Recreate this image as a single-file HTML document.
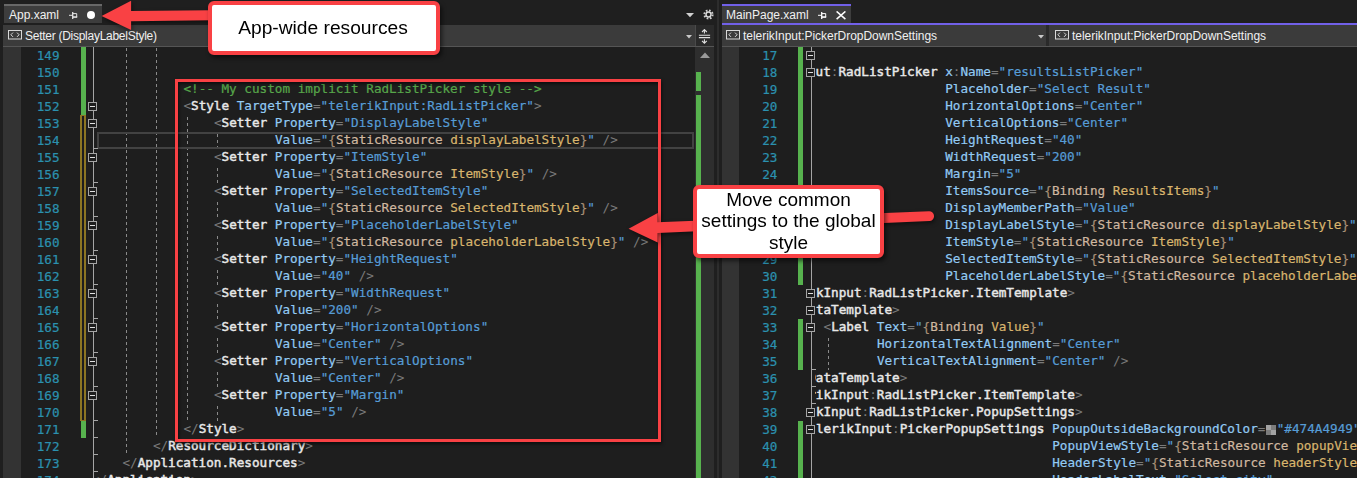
<!DOCTYPE html>
<html lang="en"><head><meta charset="utf-8"><title>XAML styles</title>
<style>
*{box-sizing:border-box;margin:0;padding:0}
html,body{width:1357px;height:478px;overflow:hidden;background:#1e1e1e}
body{position:relative;font-family:"Liberation Sans",sans-serif}
.abs{position:absolute}
.code{position:absolute;margin-top:-1.5px;white-space:pre;-webkit-text-stroke:0.2px;font-family:"DejaVu Sans Mono","Liberation Mono",monospace;font-size:12.66px;line-height:17px;height:17px;color:#dcdcdc;letter-spacing:0}
.ln{position:absolute;margin-top:0.4px;white-space:pre;-webkit-text-stroke:0.2px;font-family:"DejaVu Sans Mono","Liberation Mono",monospace;font-size:12.66px;line-height:17px;height:17px;color:#2b91af;text-align:right}
.d{color:#7a7a7a;-webkit-text-stroke:0}
.n{color:#e8e8e8;-webkit-text-stroke:0.45px}
.a{color:#92caf4}
.v{color:#569cd6}
.c{color:#57a64a}
.x{color:#d0b8a0}
.p{color:#d9b56d}
.b{color:#a88f76}
.ui{position:absolute;white-space:pre;font-family:"Liberation Sans",sans-serif;font-size:12px;color:#f0f0f0;line-height:16px}
.ob{position:absolute;width:9px;height:9px;border:1px solid #a5a5a5;background:#1e1e1e}
.ob:after{content:"";position:absolute;left:1px;top:3px;width:5px;height:1px;background:#e0e0e0}
.call{position:absolute;background:#fff;border:4px solid #f94144;border-radius:6px;box-shadow:2px 3px 4px rgba(0,0,0,.55);color:#000;font-family:"Liberation Sans",sans-serif;text-align:center}
</style></head>
<body>
<div class="abs" style="left:0;top:0;width:718px;height:25px;background:#1f1f1f"></div>
<div class="abs" style="left:4px;top:4px;width:98px;height:19px;background:#3d3d3d;border-top:2px solid #686868"></div>
<div class="ui" style="left:9px;top:7px">App.xaml</div>
<svg class="abs" style="left:68.9px;top:11px" width="10" height="9" viewBox="0 0 10 9"><path d="M0 4.3H3.6" fill="none" stroke="#e4e4e4" stroke-width="1"/><path d="M3.7 1V8" fill="none" stroke="#e4e4e4" stroke-width="1.3"/><path d="M4 2.6H7.7V6" fill="none" stroke="#e4e4e4" stroke-width="1"/><path d="M4 6.05H8.2" fill="none" stroke="#e4e4e4" stroke-width="1.6"/></svg>
<div class="abs" style="left:87px;top:11px;width:8px;height:8px;border-radius:50%;background:#fff"></div>
<div class="abs" style="left:3px;top:25px;width:692px;height:21px;background:#3b3b3b"></div>
<div class="abs" style="left:3px;top:46px;width:711px;height:1px;background:#555"></div>
<div class="abs" style="left:695px;top:25px;width:19px;height:21px;background:#2a2a2a;border-left:1px solid #4a4a4a"></div>
<div class="ui" style="left:25px;top:28.3px;letter-spacing:-0.27px">Setter (DisplayLabelStyle)</div>
<svg class="abs" style="left:8px;top:30px" width="14" height="10" viewBox="0 0 14 10"><rect x="0.5" y="0.5" width="13" height="8.5" fill="none" stroke="#d8d8d8" stroke-width="1"/><path d="M5 2.6L2.9 4.75L5 6.9M9 2.6L11.1 4.75L9 6.9" fill="none" stroke="#d8d8d8" stroke-width="1"/></svg>
<svg class="abs" style="left:686px;top:34.6px" width="6" height="4" viewBox="0 0 6 4"><path d="M0 0H6L3 3.5Z" fill="#c8c8c8"/></svg>
<svg class="abs" style="left:698px;top:28.5px" width="13" height="15" viewBox="0 0 13 15"><path d="M0.9 6.3H12.1M0.9 8.6H12.1M6.4 0.6V4.6M6.4 10.3V14.2M4 3L6.4 0.6L8.8 3M4 11.8L6.4 14.2L8.8 11.8" fill="none" stroke="#e0e0e0" stroke-width="1.1"/></svg>
<svg class="abs" style="left:686px;top:12.8px" width="8" height="5" viewBox="0 0 8 5"><path d="M0 0H8L4 4.2Z" fill="#d0d0d0"/></svg>
<svg class="abs" style="left:702.5px;top:8.5px" width="11" height="11" viewBox="0 0 11 11"><circle cx="5.5" cy="5.5" r="4.1" fill="none" stroke="#cfcfcf" stroke-width="2" stroke-dasharray="1.7 1.52"/><circle cx="5.5" cy="5.5" r="2.45" fill="none" stroke="#d8d8d8" stroke-width="1.5"/></svg>
<div class="abs" style="left:0;top:47px;width:3px;height:431px;background:#1f1f1f"></div>
<div class="abs" style="left:3px;top:47px;width:18px;height:431px;background:#333333"></div>
<div class="abs" style="left:695px;top:47px;width:19px;height:431px;background:#2e2e2e"></div>
<svg class="abs" style="left:700px;top:52px" width="10" height="6" viewBox="0 0 10 6"><path d="M0 6H10L5 0.5Z" fill="#999"/></svg>
<div class="abs" style="left:696.3px;top:72px;width:4.4px;height:19px;background:#57b24e"></div>
<div class="abs" style="left:696.3px;top:95px;width:4.4px;height:383px;background:#57b24e"></div>
<div class="abs" style="left:714px;top:0;width:8px;height:478px;background:#1f1f1f"></div>
<div class="abs" style="left:717px;top:0;width:2px;height:478px;background:#2d2d2d"></div>
<div class="abs" style="left:80.6px;top:47px;width:5.2px;height:68px;background:#57b24e"></div>
<div class="abs" style="left:80px;top:115px;width:6px;height:306px;border:1px solid #8c7523;border-right-width:2px;border-left-width:2px"></div>
<div class="abs" style="left:80.6px;top:421px;width:5.2px;height:17px;background:#57b24e"></div>
<div class="abs" style="left:93px;top:47px;width:1px;height:431px;background:#a5a5a5"></div>
<div class="abs" style="left:126px;top:47px;width:1px;height:408px;background:repeating-linear-gradient(to bottom,#8a8a8a 0,#8a8a8a 3px,transparent 3px,transparent 6px);background-position:0 1px;background-repeat:repeat-y;background-size:1px 6px"></div>
<div class="abs" style="left:156px;top:47px;width:1px;height:391px;background:repeating-linear-gradient(to bottom,#8a8a8a 0,#8a8a8a 3px,transparent 3px,transparent 6px);background-position:0 1px;background-repeat:repeat-y;background-size:1px 6px"></div>
<div class="abs" style="left:187px;top:115px;width:1px;height:306px;background:repeating-linear-gradient(to bottom,#8a8a8a 0,#8a8a8a 3px,transparent 3px,transparent 6px);background-position:0 2px;background-repeat:repeat-y;background-size:1px 6px"></div>
<div class="abs" style="left:217px;top:132px;width:1px;height:17px;background:repeating-linear-gradient(to bottom,#8a8a8a 0,#8a8a8a 3px,transparent 3px,transparent 6px);background-position:0 2px;background-repeat:repeat-y;background-size:1px 6px"></div>
<div class="abs" style="left:217px;top:166px;width:1px;height:17px;background:repeating-linear-gradient(to bottom,#8a8a8a 0,#8a8a8a 3px,transparent 3px,transparent 6px);background-position:0 2px;background-repeat:repeat-y;background-size:1px 6px"></div>
<div class="abs" style="left:217px;top:200px;width:1px;height:17px;background:repeating-linear-gradient(to bottom,#8a8a8a 0,#8a8a8a 3px,transparent 3px,transparent 6px);background-position:0 2px;background-repeat:repeat-y;background-size:1px 6px"></div>
<div class="abs" style="left:217px;top:234px;width:1px;height:17px;background:repeating-linear-gradient(to bottom,#8a8a8a 0,#8a8a8a 3px,transparent 3px,transparent 6px);background-position:0 2px;background-repeat:repeat-y;background-size:1px 6px"></div>
<div class="abs" style="left:217px;top:268px;width:1px;height:17px;background:repeating-linear-gradient(to bottom,#8a8a8a 0,#8a8a8a 3px,transparent 3px,transparent 6px);background-position:0 2px;background-repeat:repeat-y;background-size:1px 6px"></div>
<div class="abs" style="left:217px;top:302px;width:1px;height:17px;background:repeating-linear-gradient(to bottom,#8a8a8a 0,#8a8a8a 3px,transparent 3px,transparent 6px);background-position:0 2px;background-repeat:repeat-y;background-size:1px 6px"></div>
<div class="abs" style="left:217px;top:336px;width:1px;height:17px;background:repeating-linear-gradient(to bottom,#8a8a8a 0,#8a8a8a 3px,transparent 3px,transparent 6px);background-position:0 2px;background-repeat:repeat-y;background-size:1px 6px"></div>
<div class="abs" style="left:217px;top:370px;width:1px;height:17px;background:repeating-linear-gradient(to bottom,#8a8a8a 0,#8a8a8a 3px,transparent 3px,transparent 6px);background-position:0 2px;background-repeat:repeat-y;background-size:1px 6px"></div>
<div class="abs" style="left:217px;top:404px;width:1px;height:17px;background:repeating-linear-gradient(to bottom,#8a8a8a 0,#8a8a8a 3px,transparent 3px,transparent 6px);background-position:0 2px;background-repeat:repeat-y;background-size:1px 6px"></div>
<div class="abs" style="left:97px;top:132px;width:597px;height:17px;border:2px solid #424242"></div>
<div class="ln" style="left:21px;top:47px;width:38.5px">149</div>
<div class="ln" style="left:21px;top:64px;width:38.5px">150</div>
<div class="ln" style="left:21px;top:81px;width:38.5px">151</div><div class="code" style="left:183.40px;top:81px"><span class="c">&lt;!-- My custom implicit RadListPicker style --&gt;</span></div>
<div class="ln" style="left:21px;top:98px;width:38.5px">152</div><div class="code" style="left:183.40px;top:98px"><span class="d">&lt;</span><span class="n">Style</span> <span class="a">TargetType</span><span class="d">=</span><span class="v">"</span><span class="v">telerikInput:RadListPicker</span><span class="v">"</span><span class="d">&gt;</span></div>
<div class="ln" style="left:21px;top:115px;width:38.5px">153</div><div class="code" style="left:213.90px;top:115px"><span class="d">&lt;</span><span class="n">Setter</span> <span class="a">Property</span><span class="d">=</span><span class="v">"</span><span class="v">DisplayLabelStyle</span><span class="v">"</span></div>
<div class="ln" style="left:21px;top:132px;width:38.5px">154</div><div class="code" style="left:274.90px;top:132px"><span class="a">Value</span><span class="d">=</span><span class="v">"</span><span class="b">{</span><span class="x">StaticResource</span> <span class="p">displayLabelStyle</span><span class="b">}</span><span class="v">"</span> <span class="d">/&gt;</span></div>
<div class="ln" style="left:21px;top:149px;width:38.5px">155</div><div class="code" style="left:213.90px;top:149px"><span class="d">&lt;</span><span class="n">Setter</span> <span class="a">Property</span><span class="d">=</span><span class="v">"</span><span class="v">ItemStyle</span><span class="v">"</span></div>
<div class="ln" style="left:21px;top:166px;width:38.5px">156</div><div class="code" style="left:274.90px;top:166px"><span class="a">Value</span><span class="d">=</span><span class="v">"</span><span class="b">{</span><span class="x">StaticResource</span> <span class="p">ItemStyle</span><span class="b">}</span><span class="v">"</span> <span class="d">/&gt;</span></div>
<div class="ln" style="left:21px;top:183px;width:38.5px">157</div><div class="code" style="left:213.90px;top:183px"><span class="d">&lt;</span><span class="n">Setter</span> <span class="a">Property</span><span class="d">=</span><span class="v">"</span><span class="v">SelectedItemStyle</span><span class="v">"</span></div>
<div class="ln" style="left:21px;top:200px;width:38.5px">158</div><div class="code" style="left:274.90px;top:200px"><span class="a">Value</span><span class="d">=</span><span class="v">"</span><span class="b">{</span><span class="x">StaticResource</span> <span class="p">SelectedItemStyle</span><span class="b">}</span><span class="v">"</span> <span class="d">/&gt;</span></div>
<div class="ln" style="left:21px;top:217px;width:38.5px">159</div><div class="code" style="left:213.90px;top:217px"><span class="d">&lt;</span><span class="n">Setter</span> <span class="a">Property</span><span class="d">=</span><span class="v">"</span><span class="v">PlaceholderLabelStyle</span><span class="v">"</span></div>
<div class="ln" style="left:21px;top:234px;width:38.5px">160</div><div class="code" style="left:274.90px;top:234px"><span class="a">Value</span><span class="d">=</span><span class="v">"</span><span class="b">{</span><span class="x">StaticResource</span> <span class="p">placeholderLabelStyle</span><span class="b">}</span><span class="v">"</span> <span class="d">/&gt;</span></div>
<div class="ln" style="left:21px;top:251px;width:38.5px">161</div><div class="code" style="left:213.90px;top:251px"><span class="d">&lt;</span><span class="n">Setter</span> <span class="a">Property</span><span class="d">=</span><span class="v">"</span><span class="v">HeightRequest</span><span class="v">"</span></div>
<div class="ln" style="left:21px;top:268px;width:38.5px">162</div><div class="code" style="left:274.90px;top:268px"><span class="a">Value</span><span class="d">=</span><span class="v">"</span><span class="v">40</span><span class="v">"</span> <span class="d">/&gt;</span></div>
<div class="ln" style="left:21px;top:285px;width:38.5px">163</div><div class="code" style="left:213.90px;top:285px"><span class="d">&lt;</span><span class="n">Setter</span> <span class="a">Property</span><span class="d">=</span><span class="v">"</span><span class="v">WidthRequest</span><span class="v">"</span></div>
<div class="ln" style="left:21px;top:302px;width:38.5px">164</div><div class="code" style="left:274.90px;top:302px"><span class="a">Value</span><span class="d">=</span><span class="v">"</span><span class="v">200</span><span class="v">"</span> <span class="d">/&gt;</span></div>
<div class="ln" style="left:21px;top:319px;width:38.5px">165</div><div class="code" style="left:213.90px;top:319px"><span class="d">&lt;</span><span class="n">Setter</span> <span class="a">Property</span><span class="d">=</span><span class="v">"</span><span class="v">HorizontalOptions</span><span class="v">"</span></div>
<div class="ln" style="left:21px;top:336px;width:38.5px">166</div><div class="code" style="left:274.90px;top:336px"><span class="a">Value</span><span class="d">=</span><span class="v">"</span><span class="v">Center</span><span class="v">"</span> <span class="d">/&gt;</span></div>
<div class="ln" style="left:21px;top:353px;width:38.5px">167</div><div class="code" style="left:213.90px;top:353px"><span class="d">&lt;</span><span class="n">Setter</span> <span class="a">Property</span><span class="d">=</span><span class="v">"</span><span class="v">VerticalOptions</span><span class="v">"</span></div>
<div class="ln" style="left:21px;top:370px;width:38.5px">168</div><div class="code" style="left:274.90px;top:370px"><span class="a">Value</span><span class="d">=</span><span class="v">"</span><span class="v">Center</span><span class="v">"</span> <span class="d">/&gt;</span></div>
<div class="ln" style="left:21px;top:387px;width:38.5px">169</div><div class="code" style="left:213.90px;top:387px"><span class="d">&lt;</span><span class="n">Setter</span> <span class="a">Property</span><span class="d">=</span><span class="v">"</span><span class="v">Margin</span><span class="v">"</span></div>
<div class="ln" style="left:21px;top:404px;width:38.5px">170</div><div class="code" style="left:274.90px;top:404px"><span class="a">Value</span><span class="d">=</span><span class="v">"</span><span class="v">5</span><span class="v">"</span> <span class="d">/&gt;</span></div>
<div class="ln" style="left:21px;top:421px;width:38.5px">171</div><div class="code" style="left:183.40px;top:421px"><span class="d">&lt;/</span><span class="n">Style</span><span class="d">&gt;</span></div>
<div class="ln" style="left:21px;top:438px;width:38.5px">172</div><div class="code" style="left:152.90px;top:438px"><span class="d">&lt;/</span><span class="n">ResourceDictionary</span><span class="d">&gt;</span></div>
<div class="ln" style="left:21px;top:455px;width:38.5px">173</div><div class="code" style="left:122.40px;top:455px"><span class="d">&lt;/</span><span class="n">Application.Resources</span><span class="d">&gt;</span></div>
<div class="ln" style="left:21px;top:472px;width:38.5px">174</div><div class="code" style="left:91.90px;top:472px"><span class="d">&lt;/</span><span class="n">Application</span><span class="d">&gt;</span></div>
<div class="ob" style="left:88px;top:102px"></div><div class="ob" style="left:88px;top:119px"></div><div class="ob" style="left:88px;top:153px"></div><div class="ob" style="left:88px;top:187px"></div><div class="ob" style="left:88px;top:221px"></div><div class="ob" style="left:88px;top:255px"></div><div class="ob" style="left:88px;top:289px"></div><div class="ob" style="left:88px;top:323px"></div><div class="ob" style="left:88px;top:357px"></div><div class="ob" style="left:88px;top:391px"></div>
<div class="abs" style="left:93px;top:148px;width:5px;height:1px;background:#a5a5a5"></div><div class="abs" style="left:93px;top:182px;width:5px;height:1px;background:#a5a5a5"></div><div class="abs" style="left:93px;top:216px;width:5px;height:1px;background:#a5a5a5"></div><div class="abs" style="left:93px;top:250px;width:5px;height:1px;background:#a5a5a5"></div><div class="abs" style="left:93px;top:284px;width:5px;height:1px;background:#a5a5a5"></div><div class="abs" style="left:93px;top:318px;width:5px;height:1px;background:#a5a5a5"></div><div class="abs" style="left:93px;top:352px;width:5px;height:1px;background:#a5a5a5"></div><div class="abs" style="left:93px;top:386px;width:5px;height:1px;background:#a5a5a5"></div><div class="abs" style="left:93px;top:420px;width:5px;height:1px;background:#a5a5a5"></div><div class="abs" style="left:93px;top:437px;width:5px;height:1px;background:#a5a5a5"></div><div class="abs" style="left:93px;top:454px;width:5px;height:1px;background:#a5a5a5"></div><div class="abs" style="left:93px;top:471px;width:5px;height:1px;background:#a5a5a5"></div>
<div class="abs" style="left:722px;top:0;width:635px;height:25px;background:#1f1f1f"></div>
<div class="abs" style="left:722px;top:4px;width:129px;height:19px;background:#3d3d3d;border-top:2px solid #7160e8"></div>
<div class="abs" style="left:722px;top:23px;width:635px;height:2px;background:#7160e8"></div>
<div class="ui" style="left:726px;top:7px">MainPage.xaml</div>
<svg class="abs" style="left:817.8px;top:11px" width="10" height="9" viewBox="0 0 10 9"><path d="M0 4.3H3.6" fill="none" stroke="#ffffff" stroke-width="1"/><path d="M3.7 1V8" fill="none" stroke="#ffffff" stroke-width="1.3"/><path d="M4 2.6H7.7V6" fill="none" stroke="#ffffff" stroke-width="1"/><path d="M4 6.05H8.2" fill="none" stroke="#ffffff" stroke-width="1.6"/></svg>
<svg class="abs" style="left:836px;top:11px" width="10" height="9" viewBox="0 0 10 9"><path d="M0.6 0.4L9.4 8.1M9.4 0.4L0.6 8.1" fill="none" stroke="#ffffff" stroke-width="1.5"/></svg>
<div class="abs" style="left:722px;top:25px;width:635px;height:21px;background:#3b3b3b"></div>
<div class="abs" style="left:722px;top:46px;width:635px;height:1px;background:#555"></div>
<div class="abs" style="left:1046px;top:25px;width:3px;height:21px;background:#2a2a2a"></div>
<svg class="abs" style="left:726px;top:30px" width="14" height="10" viewBox="0 0 14 10"><rect x="0.5" y="0.5" width="13" height="8.5" fill="none" stroke="#d8d8d8" stroke-width="1"/><path d="M5 2.6L2.9 4.75L5 6.9M9 2.6L11.1 4.75L9 6.9" fill="none" stroke="#d8d8d8" stroke-width="1"/></svg>
<div class="ui" style="left:743px;top:28.2px;letter-spacing:-0.04px">telerikInput:PickerDropDownSettings</div>
<svg class="abs" style="left:1038px;top:34.6px" width="6" height="4" viewBox="0 0 6 4"><path d="M0 0H6L3 3.5Z" fill="#c8c8c8"/></svg>
<svg class="abs" style="left:1055px;top:30px" width="14" height="10" viewBox="0 0 14 10"><rect x="0.5" y="0.5" width="13" height="8.5" fill="none" stroke="#d8d8d8" stroke-width="1"/><path d="M5 2.6L2.9 4.75L5 6.9M9 2.6L11.1 4.75L9 6.9" fill="none" stroke="#d8d8d8" stroke-width="1"/></svg>
<div class="ui" style="left:1072px;top:28.2px;letter-spacing:-0.04px">telerikInput:PickerDropDownSettings</div>
<div class="abs" style="left:722px;top:47px;width:17px;height:431px;background:#333333"></div>
<div class="abs" style="left:798.4px;top:47px;width:5px;height:238px;background:#57b24e"></div>
<div class="abs" style="left:798.4px;top:319px;width:5px;height:51px;background:#57b24e"></div>
<div class="abs" style="left:798.4px;top:421px;width:5px;height:57px;background:#57b24e"></div>
<div class="abs" style="left:811px;top:47px;width:1px;height:431px;background:#a5a5a5"></div>
<div class="abs" style="left:815px;top:47px;width:542px;height:431px;overflow:hidden">
<div class="code" style="left:0.58px;top:17px"><span class="n">ut</span><span class="d">:</span><span class="n">RadListPicker</span> <span class="a">x</span><span class="d">:</span><span class="a">Name</span><span class="d">=</span><span class="v">"</span><span class="v">resultsListPicker</span><span class="v">"</span></div>
<div class="code" style="left:130.20px;top:34px"><span class="a">Placeholder</span><span class="d">=</span><span class="v">"</span><span class="v">Select Result</span><span class="v">"</span></div>
<div class="code" style="left:130.20px;top:51px"><span class="a">HorizontalOptions</span><span class="d">=</span><span class="v">"</span><span class="v">Center</span><span class="v">"</span></div>
<div class="code" style="left:130.20px;top:68px"><span class="a">VerticalOptions</span><span class="d">=</span><span class="v">"</span><span class="v">Center</span><span class="v">"</span></div>
<div class="code" style="left:130.20px;top:85px"><span class="a">HeightRequest</span><span class="d">=</span><span class="v">"</span><span class="v">40</span><span class="v">"</span></div>
<div class="code" style="left:130.20px;top:102px"><span class="a">WidthRequest</span><span class="d">=</span><span class="v">"</span><span class="v">200</span><span class="v">"</span></div>
<div class="code" style="left:130.20px;top:119px"><span class="a">Margin</span><span class="d">=</span><span class="v">"</span><span class="v">5</span><span class="v">"</span></div>
<div class="code" style="left:130.20px;top:136px"><span class="a">ItemsSource</span><span class="d">=</span><span class="v">"</span><span class="b">{</span><span class="x">Binding</span> <span class="p">ResultsItems</span><span class="b">}</span><span class="v">"</span></div>
<div class="code" style="left:130.20px;top:153px"><span class="a">DisplayMemberPath</span><span class="d">=</span><span class="v">"</span><span class="v">Value</span><span class="v">"</span></div>
<div class="code" style="left:130.20px;top:170px"><span class="a">DisplayLabelStyle</span><span class="d">=</span><span class="v">"</span><span class="b">{</span><span class="x">StaticResource</span> <span class="p">displayLabelStyle</span><span class="b">}</span><span class="v">"</span></div>
<div class="code" style="left:130.20px;top:187px"><span class="a">ItemStyle</span><span class="d">=</span><span class="v">"</span><span class="b">{</span><span class="x">StaticResource</span> <span class="p">ItemStyle</span><span class="b">}</span><span class="v">"</span></div>
<div class="code" style="left:130.20px;top:204px"><span class="a">SelectedItemStyle</span><span class="d">=</span><span class="v">"</span><span class="b">{</span><span class="x">StaticResource</span> <span class="p">SelectedItemStyle</span><span class="b">}</span><span class="v">"</span></div>
<div class="code" style="left:130.20px;top:221px"><span class="a">PlaceholderLabelStyle</span><span class="d">=</span><span class="v">"</span><span class="b">{</span><span class="x">StaticResource</span> <span class="p">placeholderLabelStyle</span><span class="b">}</span><span class="v">"</span></div>
<div class="code" style="left:0.88px;top:238px"><span class="n">kInput</span><span class="d">:</span><span class="n">RadListPicker.ItemTemplate</span><span class="d">&gt;</span></div>
<div class="code" style="left:0.88px;top:255px"><span class="n">taTemplate</span><span class="d">&gt;</span></div>
<div class="code" style="left:8.50px;top:272px"><span class="d">&lt;</span><span class="n">Label</span> <span class="a">Text</span><span class="d">=</span><span class="v">"</span><span class="b">{</span><span class="x">Binding</span> <span class="p">Value</span><span class="b">}</span><span class="v">"</span></div>
<div class="code" style="left:61.88px;top:289px"><span class="a">HorizontalTextAlignment</span><span class="d">=</span><span class="v">"</span><span class="v">Center</span><span class="v">"</span></div>
<div class="code" style="left:61.88px;top:306px"><span class="a">VerticalTextAlignment</span><span class="d">=</span><span class="v">"</span><span class="v">Center</span><span class="v">"</span> <span class="d">/&gt;</span></div>
<div class="code" style="left:-6.75px;top:323px"><span class="n">DataTemplate</span><span class="d">&gt;</span></div>
<div class="code" style="left:-6.75px;top:340px"><span class="n">rikInput</span><span class="d">:</span><span class="n">RadListPicker.ItemTemplate</span><span class="d">&gt;</span></div>
<div class="code" style="left:0.88px;top:357px"><span class="n">kInput</span><span class="d">:</span><span class="n">RadListPicker.PopupSettings</span><span class="d">&gt;</span></div>
<div class="code" style="left:0.88px;top:374px"><span class="n">lerikInput</span><span class="d">:</span><span class="n">PickerPopupSettings</span> <span class="a">PopupOutsideBackgroundColor</span><span class="d">=</span></div>
<div class="code" style="left:461.75px;top:374px"><span class="v">"#474A4949"</span></div>
<div class="code" style="left:237.25px;top:391px"><span class="a">PopupViewStyle</span><span class="d">=</span><span class="v">"</span><span class="b">{</span><span class="x">StaticResource</span> <span class="p">popupViewStyle</span><span class="b">}</span><span class="v">"</span></div>
<div class="code" style="left:237.25px;top:408px"><span class="a">HeaderStyle</span><span class="d">=</span><span class="v">"</span><span class="b">{</span><span class="x">StaticResource</span> <span class="p">headerStyle</span><span class="b">}</span><span class="v">"</span></div>
<div class="code" style="left:237.25px;top:425px"><span class="a">HeaderLabelText</span><span class="d">=</span><span class="v">"</span><span class="v">Select city</span><span class="v">"</span></div>
</div>
<div class="abs" style="left:1266.4px;top:425px;width:9.8px;height:10px;background:conic-gradient(#7c7c7c 0 25%,#a2a2a2 0 50%,#7c7c7c 0 75%,#a2a2a2 0)"></div>
<div class="abs" style="left:827.5px;top:336px;width:1px;height:34px;background:repeating-linear-gradient(to bottom,#8a8a8a 0,#8a8a8a 3px,transparent 3px,transparent 6px);background-position:0 2px;background-repeat:repeat-y;background-size:1px 6px"></div>
<div class="ln" style="left:739px;top:47px;width:38.5px">17</div><div class="ln" style="left:739px;top:64px;width:38.5px">18</div><div class="ln" style="left:739px;top:81px;width:38.5px">19</div><div class="ln" style="left:739px;top:98px;width:38.5px">20</div><div class="ln" style="left:739px;top:115px;width:38.5px">21</div><div class="ln" style="left:739px;top:132px;width:38.5px">22</div><div class="ln" style="left:739px;top:149px;width:38.5px">23</div><div class="ln" style="left:739px;top:166px;width:38.5px">24</div><div class="ln" style="left:739px;top:183px;width:38.5px">25</div><div class="ln" style="left:739px;top:200px;width:38.5px">26</div><div class="ln" style="left:739px;top:217px;width:38.5px">27</div><div class="ln" style="left:739px;top:234px;width:38.5px">28</div><div class="ln" style="left:739px;top:251px;width:38.5px">29</div><div class="ln" style="left:739px;top:268px;width:38.5px">30</div><div class="ln" style="left:739px;top:285px;width:38.5px">31</div><div class="ln" style="left:739px;top:302px;width:38.5px">32</div><div class="ln" style="left:739px;top:319px;width:38.5px">33</div><div class="ln" style="left:739px;top:336px;width:38.5px">34</div><div class="ln" style="left:739px;top:353px;width:38.5px">35</div><div class="ln" style="left:739px;top:370px;width:38.5px">36</div><div class="ln" style="left:739px;top:387px;width:38.5px">37</div><div class="ln" style="left:739px;top:404px;width:38.5px">38</div><div class="ln" style="left:739px;top:421px;width:38.5px">39</div><div class="ln" style="left:739px;top:438px;width:38.5px">40</div><div class="ln" style="left:739px;top:455px;width:38.5px">41</div><div class="ln" style="left:739px;top:472px;width:38.5px">42</div>
<div class="ob" style="left:806px;top:51px"></div><div class="ob" style="left:806px;top:68px"></div><div class="ob" style="left:806px;top:289px"></div><div class="ob" style="left:806px;top:306px"></div><div class="ob" style="left:806px;top:323px"></div><div class="ob" style="left:806px;top:408px"></div><div class="ob" style="left:806px;top:425px"></div>
<div class="abs" style="left:811px;top:369px;width:5px;height:1px;background:#a5a5a5"></div><div class="abs" style="left:811px;top:386px;width:5px;height:1px;background:#a5a5a5"></div><div class="abs" style="left:811px;top:403px;width:5px;height:1px;background:#a5a5a5"></div>
<div class="abs" style="left:174.9px;top:79px;width:486.3px;height:363px;border:3.25px solid #f94144;box-shadow:1px 2px 3px rgba(0,0,0,.55),inset 1px 2px 3px rgba(0,0,0,.55)"></div>
<svg class="abs" style="left:0;top:0" width="1357" height="478" viewBox="0 0 1357 478"><g fill="#f94144" stroke="none" style="filter:drop-shadow(1px 2px 2px rgba(0,0,0,.5))"><path d="M101.6 15.9L131.1 0.7V11.05L210 10.2V20.2L131.1 21.2V30Z"/><path d="M628.6 228.8L657.7 213.1V222.2L929 211.3A4.85 4.85 0 0 1 929.4 221L657.7 232.9V242.4Z"/></g></svg>
<div class="call" style="left:208px;top:0.5px;width:232px;height:54px;font-size:19.2px;line-height:46px;padding-right:2px;transform:translateZ(0)">App-wide resources</div>
<div class="call" style="left:693px;top:184.5px;width:191px;height:73.5px;font-size:19px;line-height:21.5px;padding-top:0.2px;transform:translateZ(0)">Move common<br>settings to the global<br>style</div>
</body></html>
